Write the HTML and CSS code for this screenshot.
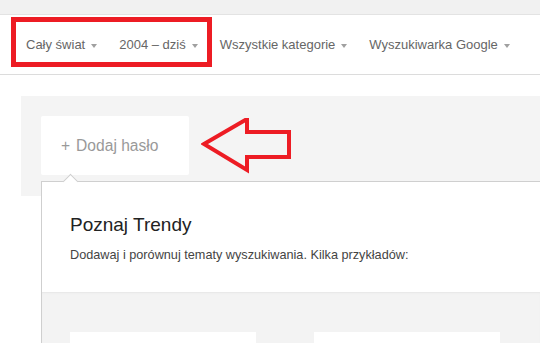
FILE: index.html
```html
<!DOCTYPE html>
<html>
<head>
	<title>Trendy Google</title>
	<link rel="stylesheet" href="styles.css">
</head>
<body>
	<div class="topbar"></div>

	<div class="nav">
		<span class="nav__item">Cały świat<i class="caret"></i></span>
		<span class="nav__item">2004 – dziś<i class="caret"></i></span>
		<span class="nav__item">Wszystkie kategorie<i class="caret"></i></span>
		<span class="nav__item">Wyszukiwarka Google<i class="caret"></i></span>
		<!-- annotation box -->
		<div class="mark-box"></div>
	</div>

	<div class="explore">
		<div class="add-term"><span class="add-term__plus">+</span>Dodaj hasło</div>

		<!-- annotation arrow -->
		<svg class="mark-arrow" width="100" height="60" viewBox="0 0 100 60">
			<polygon points="3,26 46,1 46,14 88,14 88,39 46,39 46,52" fill="none" stroke="#ed1c24" stroke-width="4" />
		</svg>

		<div class="panel">
			<div class="panel__notch"></div>
			<div class="panel__head">
				<h2>Poznaj Trendy</h2>
				<p>Dodawaj i porównuj tematy wyszukiwania. Kilka przykładów:</p>
			</div>
			<div class="panel__examples">
				<div class="example"></div>
				<div class="example"></div>
			</div>
		</div>
	</div>
</body>
</html>
```

FILE: styles.css
```css
body {
	margin: 0;
	background: #fff;
	font-family: "Liberation Sans", Arial, sans-serif;
	overflow: hidden;
}

.topbar {
	height: 14px;
	background-color: #f1f1f1;
	border-bottom: 1px solid #e3e3e3;
}

.nav {
	position: relative;
	display: flex;
	align-items: center;
	height: 59px;
	padding-left: 26px;
	border-bottom: 1px solid #dcdcdc;
	font-size: 13px;
	color: #666;
}

.nav__item {
	display: flex;
	align-items: center;
	margin-right: 22px;
	white-space: nowrap;
}

.caret {
	display: inline-block;
	margin-left: 6px;
	margin-top: 2px;
	border-left: 3.5px solid transparent;
	border-right: 3.5px solid transparent;
	border-top: 4px solid #a0a0a0;
}

.mark-box {
	position: absolute;
	left: 11px;
	top: 2px;
	width: 191px;
	height: 40px;
	border: 5px solid #ed1c24;
}

.explore {
	position: relative;
	margin: 21px 0 0 21px;
	padding: 20px 0 0 20px;
	background: linear-gradient(#f4f4f4, #f4f4f4) no-repeat;
	background-size: 100% 100px;
}

.add-term {
	width: 128px;
	height: 59px;
	line-height: 59px;
	padding-left: 20px;
	background: #fff;
	border-radius: 2px;
	font-size: 15.6px;
	color: #999;
}

.add-term__plus {
	margin-right: 6px;
}

.mark-arrow {
	position: absolute;
	left: 180px;
	top: 22px;
}

.panel {
	position: relative;
	margin-top: 6px;
	background: #fff;
	border-top: 1px solid #cfcfcf;
	border-left: 1px solid #cfcfcf;
}

.panel__notch {
	position: absolute;
	left: 23px;
	top: -6px;
	width: 10px;
	height: 10px;
	background: #fff;
	border-top: 1px solid #cfcfcf;
	border-left: 1px solid #cfcfcf;
	transform: rotate(45deg);
}

.panel__head {
	height: 110px;
	padding: 31px 0 0 28px;
	box-sizing: border-box;
}

.panel__head h2 {
	margin: 0;
	font-size: 19px;
	line-height: 23px;
	font-weight: normal;
	color: #222;
}

.panel__head p {
	margin: 11px 0 0;
	font-size: 12.7px;
	line-height: 16px;
	color: #444;
}

.panel__examples {
	display: flex;
	gap: 58px;
	height: 100px;
	padding: 40px 0 0 28px;
	background: #f3f3f3;
	box-shadow: inset 0 2px 2px -1px #e6e6e6;
}

.example {
	width: 186px;
	background: #fff;
}
```
